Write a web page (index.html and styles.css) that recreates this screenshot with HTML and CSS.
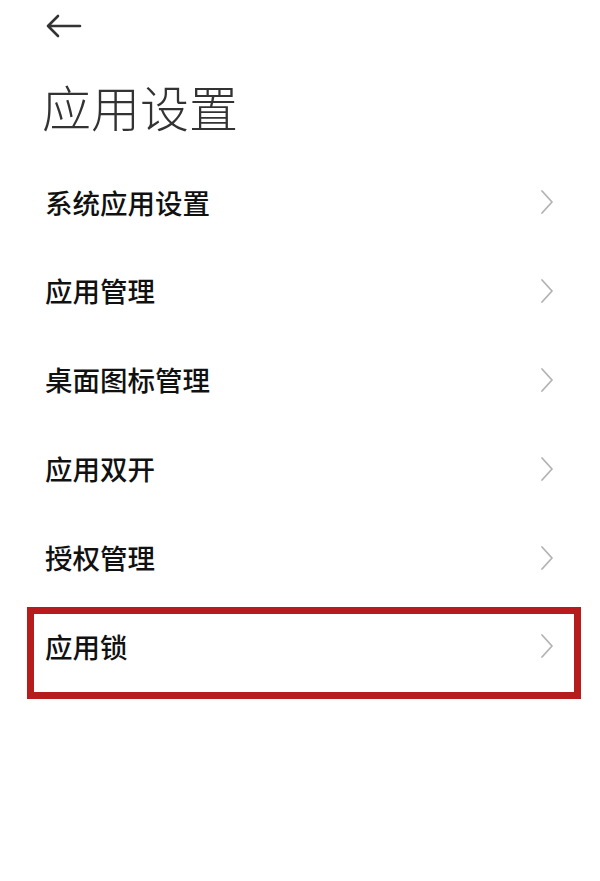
FILE: index.html
```html
<!DOCTYPE html>
<html lang="zh">
<head>
<meta charset="utf-8">
<link rel="stylesheet" href="styles.css">
</head>
<body>
<div class="page">
  <div class="topbar">
    <svg class="back" width="36" height="24" viewBox="0 0 36 24">
      <path d="M2 12 H34 M12 2 L2 12 L12 22" fill="none" stroke="#333" stroke-width="2.6" stroke-linecap="round" stroke-linejoin="round"/>
    </svg>
  </div>
  <h1 class="title">应用设置</h1>
  <ul class="list">
    <li class="row"><span class="label">系统应用设置</span><svg class="chev" width="14" height="26" viewBox="0 0 14 26"><path d="M2 2 L12 13 L2 24" fill="none" stroke="#b3b3b3" stroke-width="1.8" stroke-linecap="round" stroke-linejoin="round"/></svg></li>
    <li class="row"><span class="label">应用管理</span><svg class="chev" width="14" height="26" viewBox="0 0 14 26"><path d="M2 2 L12 13 L2 24" fill="none" stroke="#b3b3b3" stroke-width="1.8" stroke-linecap="round" stroke-linejoin="round"/></svg></li>
    <li class="row"><span class="label">桌面图标管理</span><svg class="chev" width="14" height="26" viewBox="0 0 14 26"><path d="M2 2 L12 13 L2 24" fill="none" stroke="#b3b3b3" stroke-width="1.8" stroke-linecap="round" stroke-linejoin="round"/></svg></li>
    <li class="row"><span class="label">应用双开</span><svg class="chev" width="14" height="26" viewBox="0 0 14 26"><path d="M2 2 L12 13 L2 24" fill="none" stroke="#b3b3b3" stroke-width="1.8" stroke-linecap="round" stroke-linejoin="round"/></svg></li>
    <li class="row"><span class="label">授权管理</span><svg class="chev" width="14" height="26" viewBox="0 0 14 26"><path d="M2 2 L12 13 L2 24" fill="none" stroke="#b3b3b3" stroke-width="1.8" stroke-linecap="round" stroke-linejoin="round"/></svg></li>
    <li class="row highlighted"><span class="label">应用锁</span><svg class="chev" width="14" height="26" viewBox="0 0 14 26"><path d="M2 2 L12 13 L2 24" fill="none" stroke="#b3b3b3" stroke-width="1.8" stroke-linecap="round" stroke-linejoin="round"/></svg></li>
  </ul>
</div>
</body>
</html>
```
FILE: styles.css
```css
* { box-sizing: border-box; }
html, body { margin: 0; padding: 0; background: #fff; }
body {
  font-family: "Noto Sans CJK SC", "Noto Sans", sans-serif;
  color: #111;
}
.page { width: 600px; height: 881px; overflow: hidden; }
.topbar {
  height: 50px;
  padding: 14px 0 0 46px;
}
.back { display: block; }
.title {
  margin: 0;
  padding: 0 0 0 42px;
  height: 108px;
  line-height: 112px;
  font-size: 49px;
  font-weight: 300;
  color: #333;
  letter-spacing: 0;
}
.list { list-style: none; margin: 0; padding: 0; }
.row {
  position: relative;
  height: 88.8px;
  display: flex;
  align-items: center;
  justify-content: space-between;
  padding: 0 46px 0 45px;
}
.label {
  font-size: 27.5px;
  font-weight: 500;
  color: #111;
  line-height: 1;
}
.chev { display: block; }
.highlighted::after {
  content: "";
  position: absolute;
  left: 27px;
  right: 19px;
  top: 5px;
  bottom: -8px;
  border: 7px solid #b71c1c;
  pointer-events: none;
}
```
